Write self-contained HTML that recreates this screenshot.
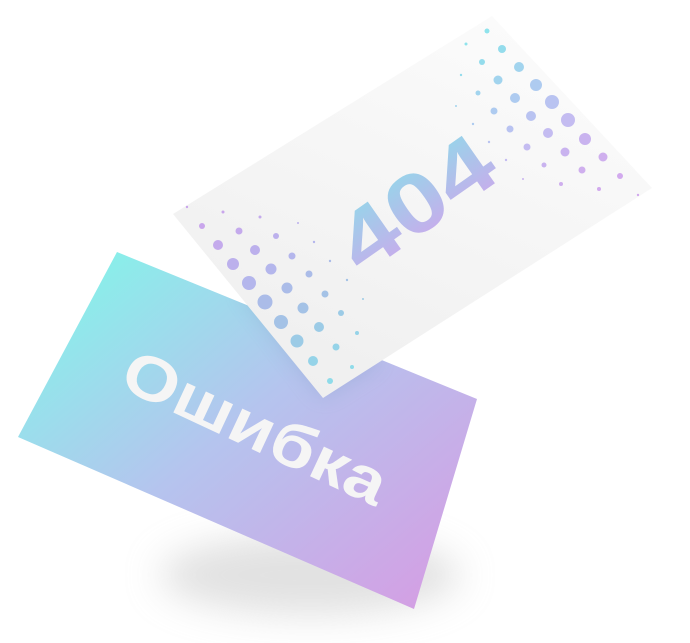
<!DOCTYPE html>
<html><head><meta charset="utf-8"><style>
html,body{margin:0;padding:0;background:#fff;width:690px;height:643px;overflow:hidden}
</style></head><body>
<svg width="690" height="643" viewBox="0 0 690 643" xmlns="http://www.w3.org/2000/svg">
<defs>
<linearGradient id="g1" x1="117" y1="252" x2="414" y2="609" gradientUnits="userSpaceOnUse">
<stop offset="0" stop-color="#8aeeea"/><stop offset="0.45" stop-color="#b5c4ee"/><stop offset="1" stop-color="#d3a0e4"/>
</linearGradient>
<linearGradient id="g404" x1="0" y1="0" x2="0" y2="1">
<stop offset="0" stop-color="#8fdbe9"/><stop offset="1" stop-color="#cfa6ec"/>
</linearGradient>
<linearGradient id="gw" x1="490" y1="16" x2="323" y2="398" gradientUnits="userSpaceOnUse">
<stop offset="0" stop-color="#fbfbfb"/><stop offset="1" stop-color="#efefef"/>
</linearGradient>
<filter id="blur" x="-50%" y="-50%" width="200%" height="200%"><feGaussianBlur stdDeviation="18"/></filter>
<filter id="blur2" x="-50%" y="-50%" width="200%" height="200%"><feGaussianBlur stdDeviation="10"/></filter>
<clipPath id="cc"><polygon points="117,252 477,399 414,609 18,437"/></clipPath>
</defs>
<ellipse cx="310" cy="575" rx="150" ry="40" fill="#c9c9c9" opacity="0.55" filter="url(#blur)"/>
<polygon points="117,252 477,399 414,609 18,437" fill="url(#g1)"/>
<g clip-path="url(#cc)"><polygon points="240,290 323,398 380,362 280,260" fill="#6a8fb4" opacity="0.25" filter="url(#blur2)"/></g>
<text x="255" y="428" transform="rotate(25 255 428)" text-anchor="middle" dominant-baseline="central" font-family="Liberation Sans, DejaVu Sans, sans-serif" font-weight="bold" font-size="62" fill="#f5f5f5" textLength="285" lengthAdjust="spacingAndGlyphs">Ошибка</text>
<polygon points="173,214 492,16 652,188 323,398" fill="url(#gw)"/>
<text x="416" y="203" transform="rotate(-35 416 203)" text-anchor="middle" dominant-baseline="central" font-family="Liberation Sans, DejaVu Sans, sans-serif" font-weight="bold" font-size="84" fill="url(#g404)" textLength="172" lengthAdjust="spacingAndGlyphs">404</text>
<g>
<circle cx="487" cy="31" r="2.5" fill="#8fe3ec"/><circle cx="502" cy="49" r="4" fill="#94dcec"/><circle cx="519" cy="67" r="5" fill="#a2d4ee"/><circle cx="536" cy="85" r="6" fill="#aecbf0"/><circle cx="552" cy="102" r="7" fill="#b9c3f1"/><circle cx="568" cy="120" r="7" fill="#c4bcf1"/><circle cx="585" cy="139" r="6" fill="#c9b3ef"/><circle cx="603" cy="157" r="4.5" fill="#cfafee"/><circle cx="620" cy="176" r="3" fill="#d2aaee"/><circle cx="638" cy="195" r="1.2" fill="#d2aaee"/>
<circle cx="466" cy="44" r="1.5" fill="#8fe3ec"/><circle cx="482" cy="62" r="3" fill="#94dcec"/><circle cx="498" cy="80" r="4.5" fill="#a2d4ee"/><circle cx="515" cy="98" r="5" fill="#aecbf0"/><circle cx="531" cy="116" r="5" fill="#b9c3f1"/><circle cx="548" cy="133" r="5" fill="#c4bcf1"/><circle cx="565" cy="152" r="4.5" fill="#c9b3ef"/><circle cx="582" cy="170" r="3.5" fill="#cfafee"/><circle cx="599" cy="189" r="2" fill="#d2aaee"/>
<circle cx="461" cy="75" r="1.2" fill="#94dcec"/><circle cx="478" cy="93" r="2.5" fill="#a2d4ee"/><circle cx="494" cy="111" r="3.5" fill="#aecbf0"/><circle cx="510" cy="129" r="3.5" fill="#b9c3f1"/><circle cx="527" cy="147" r="3.5" fill="#c4bcf1"/><circle cx="544" cy="165" r="2.5" fill="#c9b3ef"/><circle cx="561" cy="184" r="2" fill="#cfafee"/>
<circle cx="456" cy="106" r="1" fill="#a2d4ee"/><circle cx="473" cy="124" r="1.2" fill="#aecbf0"/><circle cx="489" cy="142" r="1.2" fill="#b9c3f1"/><circle cx="506" cy="160" r="1.2" fill="#c4bcf1"/><circle cx="523" cy="179" r="1" fill="#c9b3ef"/>
</g>
<g>
<circle cx="187" cy="207" r="1.2" fill="#c9a6ec"/><circle cx="202" cy="226" r="3" fill="#c9a6ec"/><circle cx="218" cy="245" r="5" fill="#c4aaec"/><circle cx="233" cy="264" r="6" fill="#bcb0ec"/><circle cx="249" cy="283" r="7" fill="#b4b6ec"/><circle cx="265" cy="302" r="7.5" fill="#abbce8"/><circle cx="281" cy="322" r="7" fill="#a4c2e6"/><circle cx="297" cy="341" r="6.5" fill="#9ccbe6"/><circle cx="313" cy="361" r="5" fill="#95d3e8"/><circle cx="330" cy="381" r="3" fill="#8fdbe9"/>
<circle cx="223" cy="212" r="1.5" fill="#c9a6ec"/><circle cx="239" cy="231" r="3.5" fill="#c4aaec"/><circle cx="255" cy="250" r="5" fill="#bcb0ec"/><circle cx="271" cy="269" r="5.5" fill="#b4b6ec"/><circle cx="287" cy="288" r="5.5" fill="#abbce8"/><circle cx="303" cy="308" r="5.5" fill="#a4c2e6"/><circle cx="319" cy="327" r="5" fill="#9ccbe6"/><circle cx="336" cy="347" r="3.5" fill="#95d3e8"/><circle cx="352" cy="367" r="2" fill="#8fdbe9"/>
<circle cx="260" cy="217" r="1.5" fill="#c4aaec"/><circle cx="276" cy="236" r="3" fill="#bcb0ec"/><circle cx="292" cy="256" r="3.5" fill="#b4b6ec"/><circle cx="309" cy="274" r="3.5" fill="#abbce8"/><circle cx="325" cy="294" r="3.5" fill="#a4c2e6"/><circle cx="341" cy="313" r="3" fill="#9ccbe6"/><circle cx="357" cy="333" r="2" fill="#95d3e8"/>
<circle cx="298" cy="223" r="1" fill="#bcb0ec"/><circle cx="314" cy="242" r="1.2" fill="#b4b6ec"/><circle cx="330" cy="261" r="1.2" fill="#abbce8"/><circle cx="347" cy="280" r="1.2" fill="#a4c2e6"/><circle cx="363" cy="299" r="1" fill="#9ccbe6"/>
</g>
</svg>
</body></html>
